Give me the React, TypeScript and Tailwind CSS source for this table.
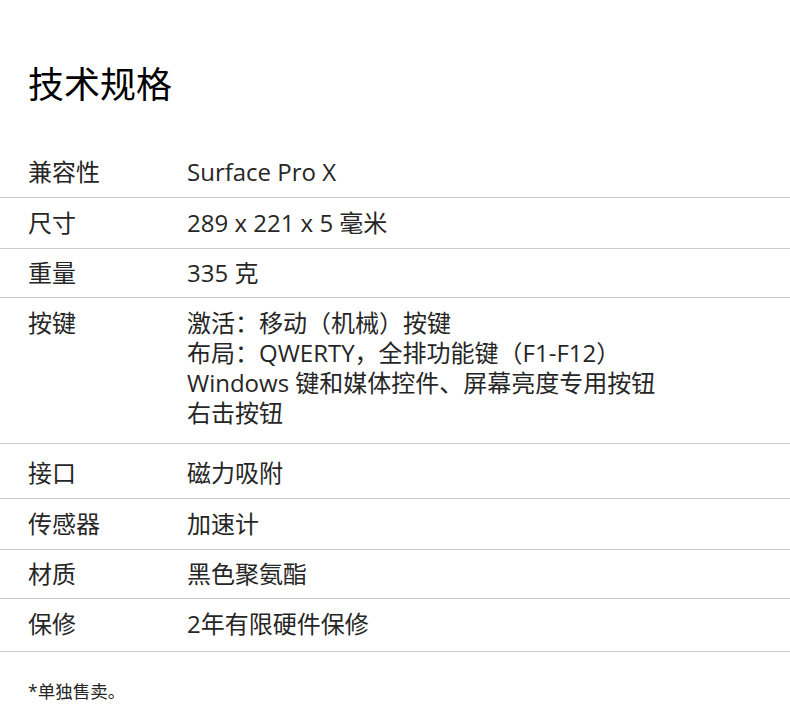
import React from 'react';

type Spec = { label: string; lines: string[]; pad: string };

const specs: Spec[] = [
  { label: '兼容性', lines: ['Surface Pro X'], pad: 'pt-[10px] pb-[10px]' },
  { label: '尺寸', lines: ['289 x 221 x 5 毫米'], pad: 'pt-[10px] pb-[10px]' },
  { label: '重量', lines: ['335 克'], pad: 'pt-[9px] pb-[9px]' },
  {
    label: '按键',
    lines: [
      '激活：移动（机械）按键',
      '布局：QWERTY，全排功能键（F1-F12）',
      'Windows 键和媒体控件、屏幕亮度专用按钮',
      '右击按钮',
    ],
    pad: 'pt-[10px] pb-[15px]',
  },
  { label: '接口', lines: ['磁力吸附'], pad: 'pt-[14px] pb-[10px]' },
  { label: '传感器', lines: ['加速计'], pad: 'pt-[10px] pb-[10px]' },
  { label: '材质', lines: ['黑色聚氨酯'], pad: 'pt-[9px] pb-[9px]' },
  { label: '保修', lines: ['2年有限硬件保修'], pad: 'pt-[10px] pb-[12px]' },
];

const App: React.FC = () => {
  return (
    <div
      className="w-[790px] min-h-[727px] bg-white text-[#262626]"
      style={{ fontFamily: '"Segoe UI", "Open Sans", "Noto Sans CJK SC", sans-serif' }}
    >
      <h1 className="px-[28px] pt-[60px] text-[36px] leading-[50px] font-normal text-black">技术规格</h1>

      <div className="mt-[37px]">
        {specs.map(row => (
          <div key={row.label} className={`flex px-[28px] border-b border-[#cccccc] ${row.pad}`}>
            <div className="w-[159px] shrink-0 text-[24px] leading-[30px]">{row.label}</div>
            <div className="text-[24px] leading-[30px]">
              {row.lines.map(line => (
                <div key={line}>{line}</div>
              ))}
            </div>
          </div>
        ))}
      </div>

      <p className="px-[28px] pt-[26px] text-[17.5px] leading-[26px]">*单独售卖。</p>
    </div>
  );
};

export default App;
